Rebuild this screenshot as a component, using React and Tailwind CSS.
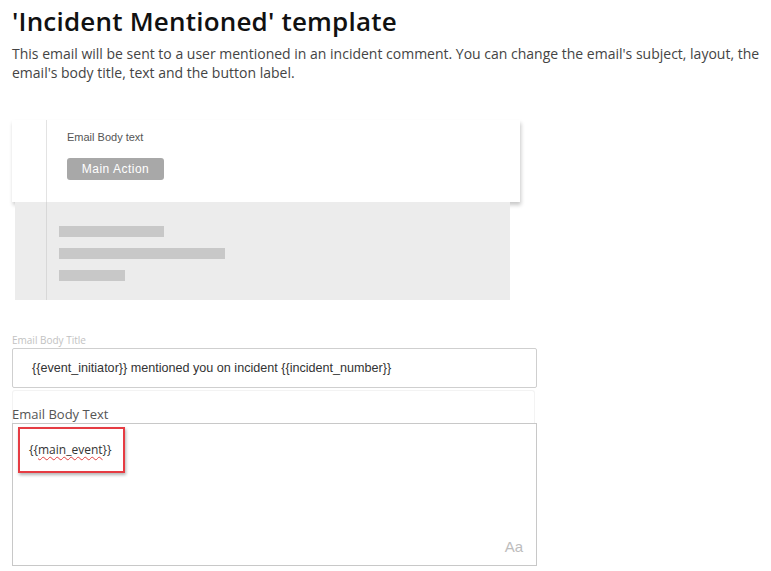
// Email template editor: "Incident Mentioned" preview and fields.
import React from "react";

const openSans = { fontFamily: '"Open Sans", "Liberation Sans", sans-serif' };

// Skeleton bars in the gray footer of the preview
const bars = ["w-[105px]", "w-[166px]", "w-[66px]"];

const App = () => {
  return (
    <div
      className="bg-white min-h-[571px] w-[771px] pl-3 pt-[4px] text-[#222] [font-family:'Open_Sans','Liberation_Sans',sans-serif]"
    >
      <h1 className="text-[26px] leading-[34px] font-semibold tracking-[0.2px] text-[#111]">
        'Incident Mentioned' template
      </h1>
      <p className="mt-[6px] text-[14px] leading-[19px] text-[#444] w-[757px]">
        This email will be sent to a user mentioned in an incident comment. You can change the email's subject, layout, the email's body title, text and the button label.
      </p>

      {/* Preview */}
      <div className="mt-[38px] w-[508px]">
        <div className="bg-white h-[82px] pl-[34px] shadow-[1px_3px_4px_rgba(0,0,0,0.22)]">
          <div className="h-full border-l border-[#e3e3e3] pl-5 pt-[10px] [font-family:'Liberation_Sans',Arial,sans-serif]">
            <div className="text-[11px] leading-[14px] text-[#555]">Email Body text</div>
            <div className="mt-[14px] w-[97px] h-[22px] rounded-[3px] bg-[#a8a8a8] text-white text-[12px] leading-[22px] tracking-[0.5px] text-center">
              Main Action
            </div>
          </div>
        </div>
        <div className="ml-[3px] w-[495px] h-[98px] bg-[#ececec] pl-[31px]">
          <div className="h-full border-l border-[#d8d8d8] pl-[12px] pt-[24px] flex flex-col gap-[11px]">
            {bars.map((w, i) => (
              <div key={i} className={`${w} h-[11px] bg-[#c8c8c8]`} />
            ))}
          </div>
        </div>
      </div>

      {/* Email Body Title */}
      <div className="mt-[33px] text-[10px] leading-[14px] text-[#c2c2c2]" style={openSans}>
        Email Body Title
      </div>
      <div className="mt-[1px] w-[525px] h-[40px] border border-[#cfcfcf] rounded-[2px] pl-[19px] flex items-center text-[12.6px] text-[#333] [font-family:'Liberation_Sans',Arial,sans-serif]">
        {"{{event_initiator}} mentioned you on incident {{incident_number}}"}
      </div>

      {/* Email Body Text */}
      <div className="mt-[2px] w-[523px] border border-b-0 border-[#f3f3f3] rounded-t-[3px] pt-[15px]">
        <div className="text-[13px] leading-[17px] text-[#555] -ml-px">Email Body Text</div>
      </div>
      <div className="relative w-[525px] h-[143px] border border-[#c8c8c8] pt-[3px] pl-[5px]">
        <div className="w-[107px] h-[46px] border-2 border-[#e63c43] shadow-[1px_2px_3px_rgba(0,0,0,0.3)] pl-[9px] pt-[12px] text-[12px] text-[#333]">
          {"{{"}
          <span className="underline decoration-wavy decoration-[#e04040] decoration-[1px] underline-offset-2">
            main_event
          </span>
          {"}}"}
        </div>
        <div className="absolute right-[13px] bottom-[11px] text-[15px] leading-[15px] text-[#bdbdbd] [font-family:'Liberation_Sans',Arial,sans-serif]">
          Aa
        </div>
      </div>
    </div>
  );
};

export default App;
